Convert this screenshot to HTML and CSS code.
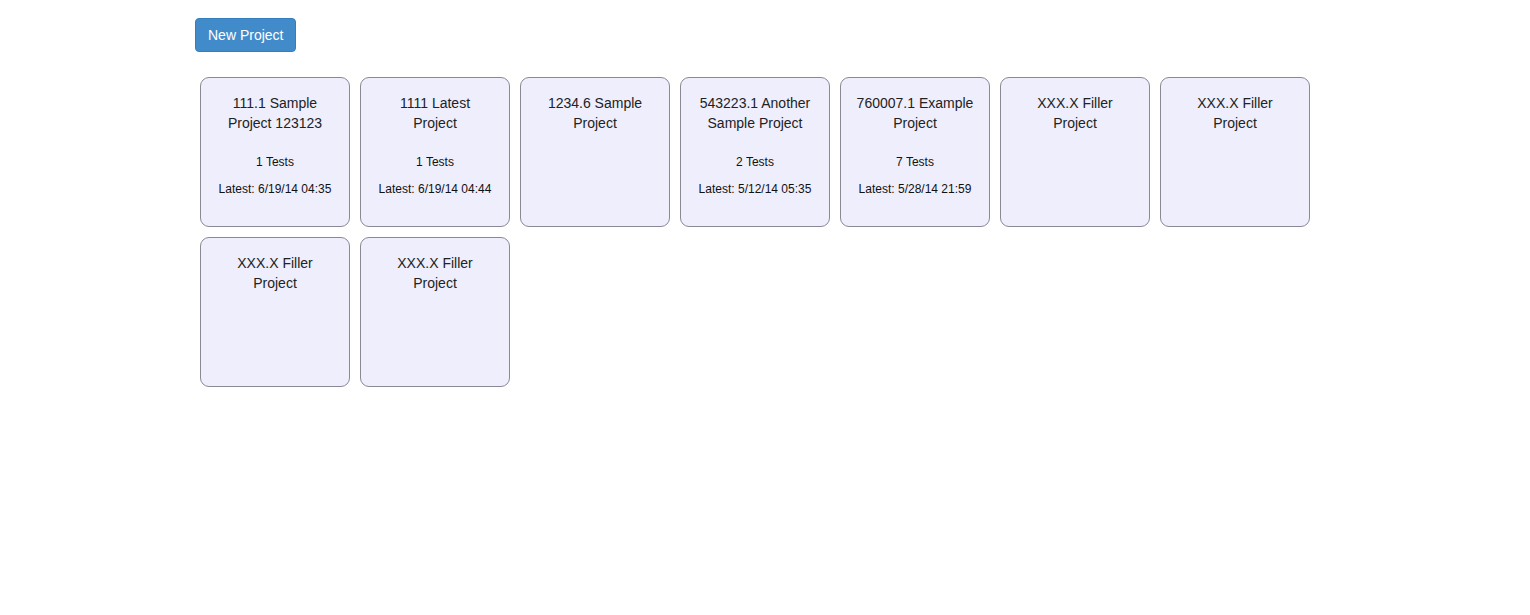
FILE: index.html
```html
<!DOCTYPE html>
<html>
<head>
<meta charset="utf-8">
<link rel="stylesheet" href="styles.css">
</head>
<body>
<div class="container">
  <div class="toolbar">
    <button class="btn">New Project</button>
  </div>
  <div class="grid">
    <div class="card">
      <div class="title">111.1 Sample Project 123123</div>
      <div class="meta tests">1 Tests</div>
      <div class="meta">Latest: 6/19/14 04:35</div>
    </div>
    <div class="card">
      <div class="title">1111 Latest Project</div>
      <div class="meta tests">1 Tests</div>
      <div class="meta">Latest: 6/19/14 04:44</div>
    </div>
    <div class="card">
      <div class="title">1234.6 Sample Project</div>
    </div>
    <div class="card">
      <div class="title">543223.1 Another Sample Project</div>
      <div class="meta tests">2 Tests</div>
      <div class="meta">Latest: 5/12/14 05:35</div>
    </div>
    <div class="card">
      <div class="title">760007.1 Example Project</div>
      <div class="meta tests">7 Tests</div>
      <div class="meta">Latest: 5/28/14 21:59</div>
    </div>
    <div class="card">
      <div class="title">XXX.X Filler Project</div>
    </div>
    <div class="card">
      <div class="title">XXX.X Filler Project</div>
    </div>
    <div class="card">
      <div class="title">XXX.X Filler Project</div>
    </div>
    <div class="card">
      <div class="title">XXX.X Filler Project</div>
    </div>
  </div>
</div>
</body>
</html>
```
FILE: styles.css
```css
html, body {
  margin: 0;
  padding: 0;
  background: #fff;
  font-family: "Liberation Sans", Arial, sans-serif;
  font-size: 14px;
  line-height: 20px;
  color: #333;
}
.container {
  width: 1140px;
  margin: 0 auto;
  padding: 18px 15px 0;
}
.toolbar {
  display: flex;
  margin-bottom: 20px;
}
.btn {
  font-family: "Liberation Sans", Arial, sans-serif;
  font-size: 14px;
  line-height: 20px;
  padding: 6px 12px;
  color: #fff;
  background: #428bca;
  border: 1px solid #357ebd;
  border-radius: 4px;
  cursor: pointer;
}
.grid {
  display: flex;
  flex-wrap: wrap;
}
.card {
  box-sizing: border-box;
  width: 150px;
  height: 150px;
  margin: 5px;
  padding: 15px 15.5px 0;
  background: #eeeefc;
  border: 1px solid #8a8a96;
  border-radius: 9px;
  text-align: center;
}
.title {
  color: #222;
}
.meta {
  font-size: 12px;
  line-height: 17px;
  color: #111;
  margin-top: 10px;
}
.meta.tests {
  margin-top: 21px;
}
```
